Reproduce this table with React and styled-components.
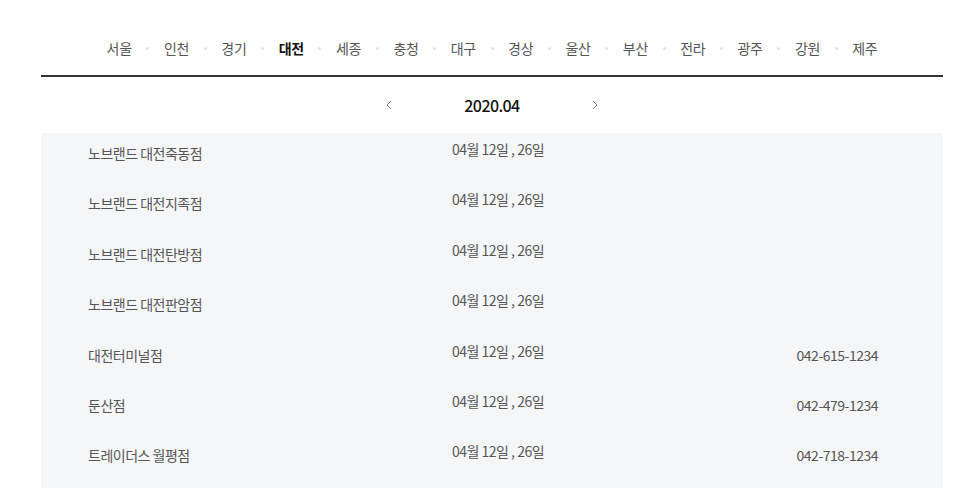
import React from "react";
import styled, { createGlobalStyle } from "styled-components";

const Global = createGlobalStyle`
  html, body { margin: 0; padding: 0; background: #fff; }
  body { font-family: "Noto Sans CJK KR", "Noto Sans", sans-serif; }
  * { box-sizing: border-box; }
`;

const Page = styled.div`
  width: 966px;
  padding: 0 23px 0 41px;
`;

const RegionNav = styled.ul`
  list-style: none;
  margin: 0;
  padding: 21px 0 0 0;
  height: 77px;
  display: flex;
  justify-content: center;
  align-items: center;
  border-bottom: 2px solid #333;
`;

const RegionItem = styled.li`
  font-size: 14px;
  letter-spacing: -0.3px;
  color: ${(p) => (p.$active ? "#111" : "#555")};
  font-weight: ${(p) => (p.$active ? 700 : 400)};
`;

const Dot = styled.li`
  width: 3px;
  height: 3px;
  border-radius: 50%;
  background: #e3e3e3;
  margin: 0 14.6px;
`;

const MonthBar = styled.div`
  height: 56px;
  display: flex;
  justify-content: center;
  align-items: center;
  gap: 72px;
`;

const Arrow = styled.button`
  border: 0;
  background: none;
  padding: 0;
  width: 6px;
  height: 10px;
  display: flex;
  cursor: pointer;
`;

const Month = styled.div`
  font-size: 16px;
  font-weight: 500;
  color: #111;
  letter-spacing: -0.6px;
`;

const Panel = styled.div`
  background: #f5f6f8;
  padding: 0 65px 2px 47px;
`;

const Row = styled.div`
  display: grid;
  grid-template-columns: 364px 1fr auto;
  height: 50.4px;
  padding-top: 10px;
  line-height: 20px;
  font-size: 14px;
  color: #555;
  letter-spacing: -0.5px;
`;

const Name = styled.div``;

const Dates = styled.div`
  margin-top: -4px;
`;

const Phone = styled.div`
  text-align: right;
`;

const regions = ["서울", "인천", "경기", "대전", "세종", "충청", "대구", "경상", "울산", "부산", "전라", "광주", "강원", "제주"];

const stores = [
  ["노브랜드 대전죽동점", ""],
  ["노브랜드 대전지족점", ""],
  ["노브랜드 대전탄방점", ""],
  ["노브랜드 대전판암점", ""],
  ["대전터미널점", "042-615-1234"],
  ["둔산점", "042-479-1234"],
  ["트레이더스 월평점", "042-718-1234"],
];

const Chevron = ({ dir }) => (
  <svg width="6" height="10" viewBox="0 0 6 10">
    <polyline
      points={dir === "left" ? "5,1 1,5 5,9" : "1,1 5,5 1,9"}
      fill="none"
      stroke="#888"
      strokeWidth="1"
    />
  </svg>
);

export default function App() {
  return (
    <Page>
      <Global />
      <RegionNav>
        {regions.map((r, i) => (
          <React.Fragment key={r}>
            {i > 0 && <Dot aria-hidden="true" />}
            <RegionItem $active={r === "대전"}>{r}</RegionItem>
          </React.Fragment>
        ))}
      </RegionNav>
      <MonthBar>
        <Arrow aria-label="이전 달"><Chevron dir="left" /></Arrow>
        <Month>2020.04</Month>
        <Arrow aria-label="다음 달"><Chevron dir="right" /></Arrow>
      </MonthBar>
      <Panel>
        {stores.map(([n, p]) => (
          <Row key={n}>
            <Name>{n}</Name>
            <Dates>04월 12일 , 26일</Dates>
            <Phone>{p}</Phone>
          </Row>
        ))}
      </Panel>
    </Page>
  );
}
